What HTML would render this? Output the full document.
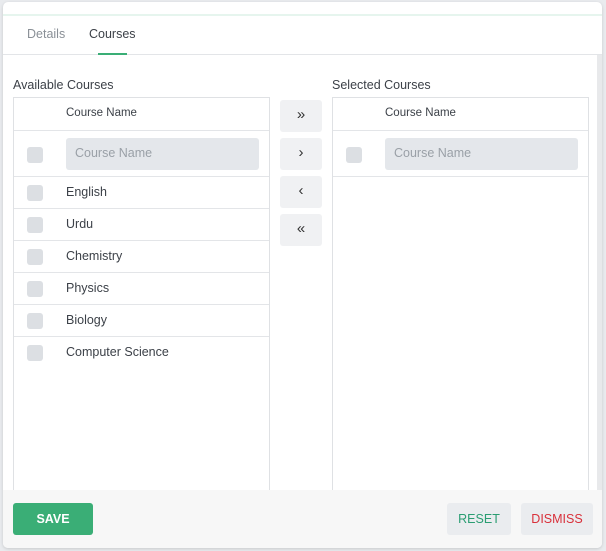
<!DOCTYPE html>
<html><head><style>
*{box-sizing:border-box;margin:0;padding:0}
body{width:606px;height:551px;background:#e9ebee;font-family:"Liberation Sans",sans-serif;position:relative;overflow:hidden;font-size:12.5px;color:#3c4148}
.modal{position:absolute;left:3px;top:2px;width:599px;height:546px;background:#fff;border-radius:5px;overflow:hidden;box-shadow:0 1px 3px rgba(0,0,0,.15)}
.gl{position:absolute;left:0;right:0;top:12px;height:2px;background:#e6f5ee}
.tabs{position:absolute;left:0;right:0;top:14px;height:39px;border-bottom:1px solid #e3e5e8}
.tab{position:absolute;top:11px;font-size:12.5px}
.ul{position:absolute;left:95px;top:37px;width:29px;height:2px;background:#3aae76}
.sb{position:absolute;right:0;top:53px;width:5px;height:435px;background:#e8e9eb}
.lbl{position:absolute;top:76px;font-size:12.5px;color:#3c4148}
.tbl{position:absolute;top:95px;width:257px;height:400px;border:1px solid #dfe1e4;border-bottom:none}
.row{position:absolute;left:0;right:0;border-bottom:1px solid #e3e5e8}
.cb{position:absolute;left:13px;width:16px;height:16px;border-radius:3px;background:#dcdfe3}
.txt{position:absolute;left:52px;font-size:12.5px}
.inp{position:absolute;left:52px;top:7px;width:193px;height:32px;background:#e4e7eb;border-radius:3px;color:#9aa0a7;padding:8px 9px}
.btn{position:absolute;left:277px;width:42px;height:32px;background:#f0f1f3;border-radius:3px;text-align:center;line-height:30px;font-size:15px;color:#333}
.foot{position:absolute;left:0;right:0;top:488px;height:58px;background:#f7f7f7}
.fb{position:absolute;top:13px;height:32px;border-radius:3px;text-align:center;line-height:32px;font-size:12.5px}
</style></head><body>
<div class="modal">
<div class="gl"></div>
<div class="tabs">
<div class="tab" style="left:24px;color:#8a9097">Details</div>
<div class="tab" style="left:86px;color:#3c4148">Courses</div>
<div class="ul"></div>
</div>
<div class="sb"></div>
<div class="lbl" style="left:10px">Available Courses</div>
<div class="lbl" style="left:329px">Selected Courses</div>
<div class="tbl" style="left:10px">
<div class="row" style="top:0;height:33px"><div class="txt" style="top:9px;font-size:11.5px">Course Name</div></div>
<div class="row" style="top:33px;height:46px"><div class="cb" style="top:16px"></div><div class="inp">Course Name</div></div>
<div class="row" style="top:79px;height:32px"><div class="cb" style="top:8px"></div><div class="txt" style="top:8px">English</div></div>
<div class="row" style="top:111px;height:32px"><div class="cb" style="top:8px"></div><div class="txt" style="top:8px">Urdu</div></div>
<div class="row" style="top:143px;height:32px"><div class="cb" style="top:8px"></div><div class="txt" style="top:8px">Chemistry</div></div>
<div class="row" style="top:175px;height:32px"><div class="cb" style="top:8px"></div><div class="txt" style="top:8px">Physics</div></div>
<div class="row" style="top:207px;height:32px"><div class="cb" style="top:8px"></div><div class="txt" style="top:8px">Biology</div></div>
<div class="row" style="top:239px;height:32px;border:none"><div class="cb" style="top:8px"></div><div class="txt" style="top:8px">Computer Science</div></div>
</div>
<div class="btn" style="top:98px">»</div>
<div class="btn" style="top:136px">›</div>
<div class="btn" style="top:174px">‹</div>
<div class="btn" style="top:212px">«</div>
<div class="tbl" style="left:329px">
<div class="row" style="top:0;height:33px"><div class="txt" style="top:9px;font-size:11.5px">Course Name</div></div>
<div class="row" style="top:33px;height:46px"><div class="cb" style="top:16px"></div><div class="inp">Course Name</div></div>
</div>
<div class="foot">
<div class="fb" style="left:10px;width:80px;background:#3aae76;color:#fff;font-weight:bold">SAVE</div>
<div class="fb" style="left:444px;width:64px;background:#eaecef;color:#2a9d72">RESET</div>
<div class="fb" style="left:518px;width:72px;background:#eaecef;color:#d9303a">DISMISS</div>
</div>
</div>
</body></html>
